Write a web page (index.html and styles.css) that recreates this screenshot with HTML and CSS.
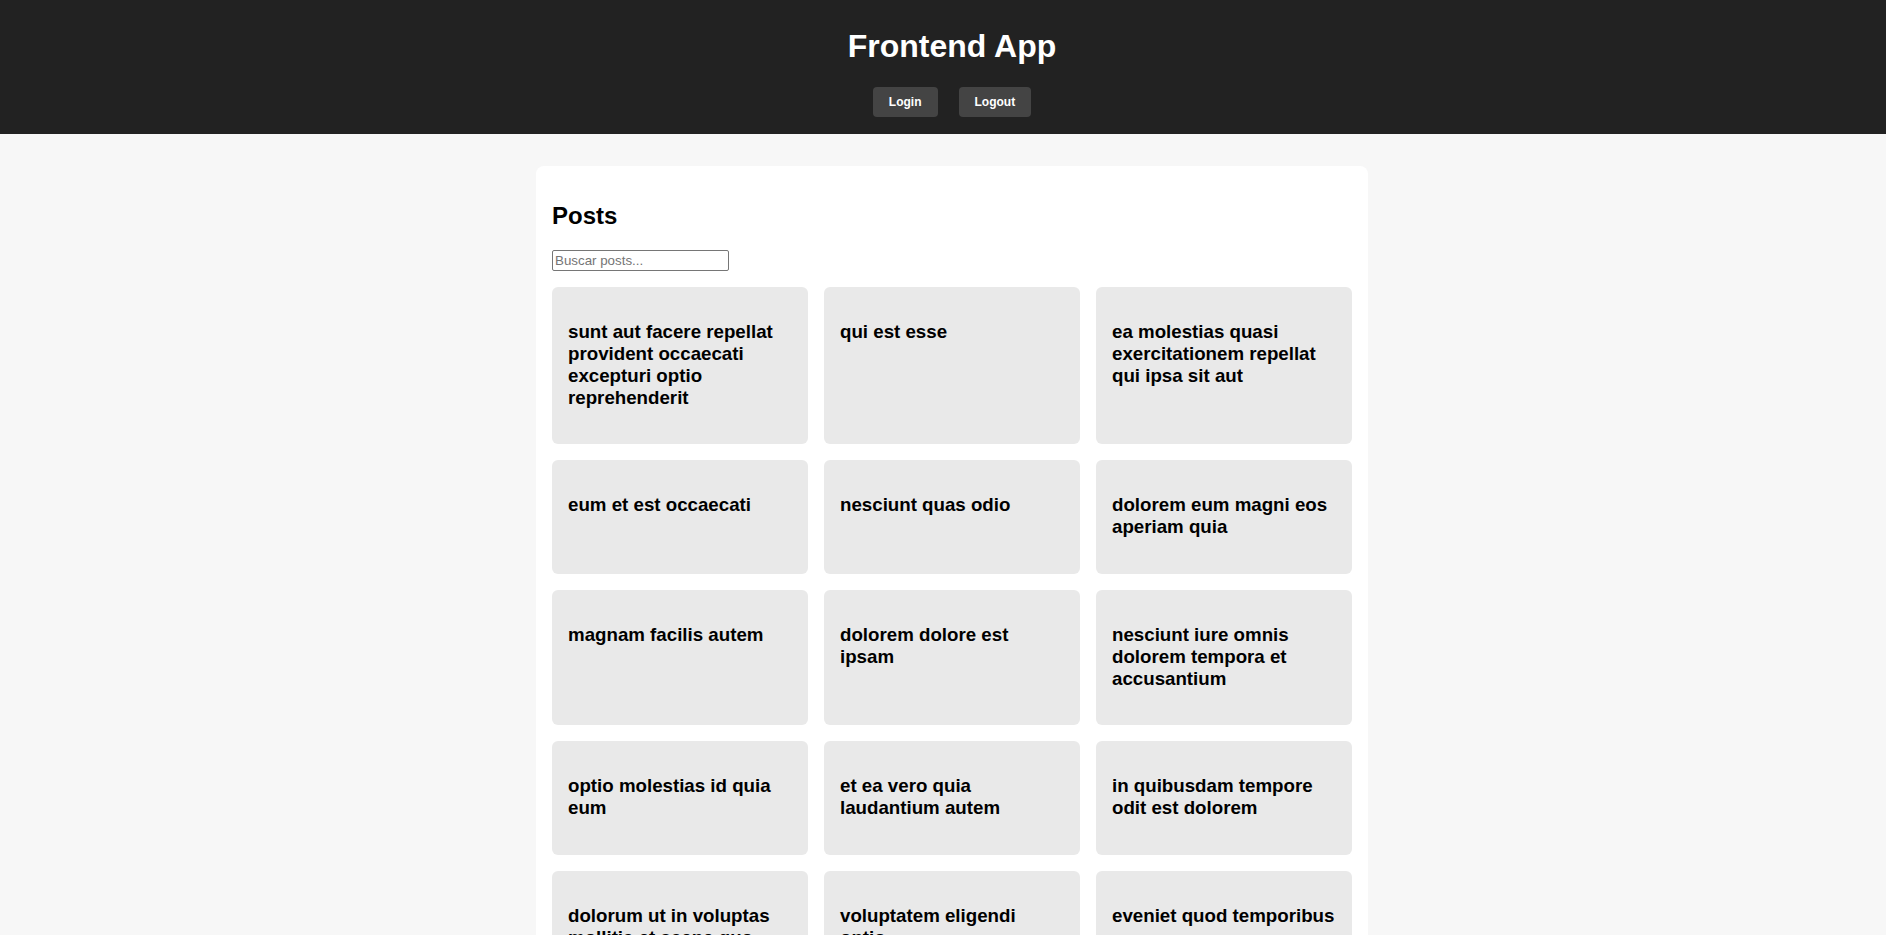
FILE: index.html
```html
<!DOCTYPE html>
<html lang="es">
<head>
<meta charset="utf-8">
<title>Frontend App</title>
<link rel="stylesheet" href="styles.css">
</head>
<body>
<header class="app-header">
  <h1 class="app-title">Frontend App</h1>
  <nav class="auth-nav">
    <button class="auth-btn">Login</button>
    <button class="auth-btn">Logout</button>
  </nav>
</header>
<main class="page">
  <section class="posts-panel">
    <h2 class="posts-title">Posts</h2>
    <input class="search-input" type="text" placeholder="Buscar posts...">
    <div class="posts-grid">
      <article class="post-card"><h3 class="post-title">sunt aut facere repellat provident occaecati excepturi optio reprehenderit</h3></article>
      <article class="post-card"><h3 class="post-title">qui est esse</h3></article>
      <article class="post-card"><h3 class="post-title">ea molestias quasi exercitationem repellat qui ipsa sit aut</h3></article>
      <article class="post-card"><h3 class="post-title">eum et est occaecati</h3></article>
      <article class="post-card"><h3 class="post-title">nesciunt quas odio</h3></article>
      <article class="post-card"><h3 class="post-title">dolorem eum magni eos aperiam quia</h3></article>
      <article class="post-card"><h3 class="post-title">magnam facilis autem</h3></article>
      <article class="post-card"><h3 class="post-title">dolorem dolore est ipsam</h3></article>
      <article class="post-card"><h3 class="post-title">nesciunt iure omnis dolorem tempora et accusantium</h3></article>
      <article class="post-card"><h3 class="post-title">optio molestias id quia eum</h3></article>
      <article class="post-card"><h3 class="post-title">et ea vero quia laudantium autem</h3></article>
      <article class="post-card"><h3 class="post-title">in quibusdam tempore odit est dolorem</h3></article>
      <article class="post-card"><h3 class="post-title">dolorum ut in voluptas mollitia et saepe quo animi</h3></article>
      <article class="post-card"><h3 class="post-title">voluptatem eligendi optio</h3></article>
      <article class="post-card"><h3 class="post-title">eveniet quod temporibus</h3></article>
      <article class="post-card"><h3 class="post-title">sint suscipit perspiciatis velit dolorum rerum ipsa laboriosam odio</h3></article>
      <article class="post-card"><h3 class="post-title">fugit voluptas sed molestias voluptatem provident</h3></article>
      <article class="post-card"><h3 class="post-title">voluptate et itaque vero tempora molestiae</h3></article>
      <article class="post-card"><h3 class="post-title">adipisci placeat illum aut reiciendis qui</h3></article>
      <article class="post-card"><h3 class="post-title">doloribus ad provident suscipit at</h3></article>
      <article class="post-card"><h3 class="post-title">asperiores ea ipsam voluptatibus modi minima quia sint</h3></article>
    </div>
  </section>
</main>
</body>
</html>
```

FILE: styles.css
```css
* {
  box-sizing: border-box;
}

html, body {
  margin: 0;
  padding: 0;
}

body {
  background: #f7f7f7;
  font-family: "Liberation Sans", Arial, sans-serif;
  color: #000;
}

.app-header {
  background: #222222;
  color: #fff;
  padding: 7px 0 17px 18px;
  display: flex;
  flex-direction: column;
  align-items: center;
}

.app-title {
  margin: 21px 0 22px;
  font-size: 32px;
  font-weight: bold;
}

.auth-nav {
  display: flex;
  gap: 21px;
}

.auth-btn {
  background: #444444;
  color: #fff;
  border: none;
  border-radius: 4px;
  padding: 8px 16px;
  font-family: "Liberation Sans", Arial, sans-serif;
  font-size: 12px;
  font-weight: bold;
  line-height: 14px;
  cursor: pointer;
}

.page {
  padding: 32px 0 32px 18px;
}

.posts-panel {
  background: #fff;
  max-width: 832px;
  margin: 0 auto;
  padding: 16px;
  border-radius: 8px;
}

.posts-title {
  font-size: 24px;
  margin: 19.92px 0;
}

.search-input {
  display: block;
  width: 177px;
  height: 21px;
  padding: 1px 2px;
  border: 1px solid #767676;
  border-radius: 2px;
  font-family: "Liberation Sans", Arial, sans-serif;
  font-size: 13.333px;
  background: #fff;
}

.search-input::placeholder {
  color: #757575;
}

.posts-grid {
  margin-top: 16px;
  display: grid;
  grid-template-columns: repeat(3, 1fr);
  gap: 16px;
}

.post-card {
  background: #e9e9e9;
  border-radius: 6px;
  padding: 16px;
}

.post-title {
  margin: 18px 0 19.44px;
  font-size: 18.72px;
  font-weight: bold;
}
```
